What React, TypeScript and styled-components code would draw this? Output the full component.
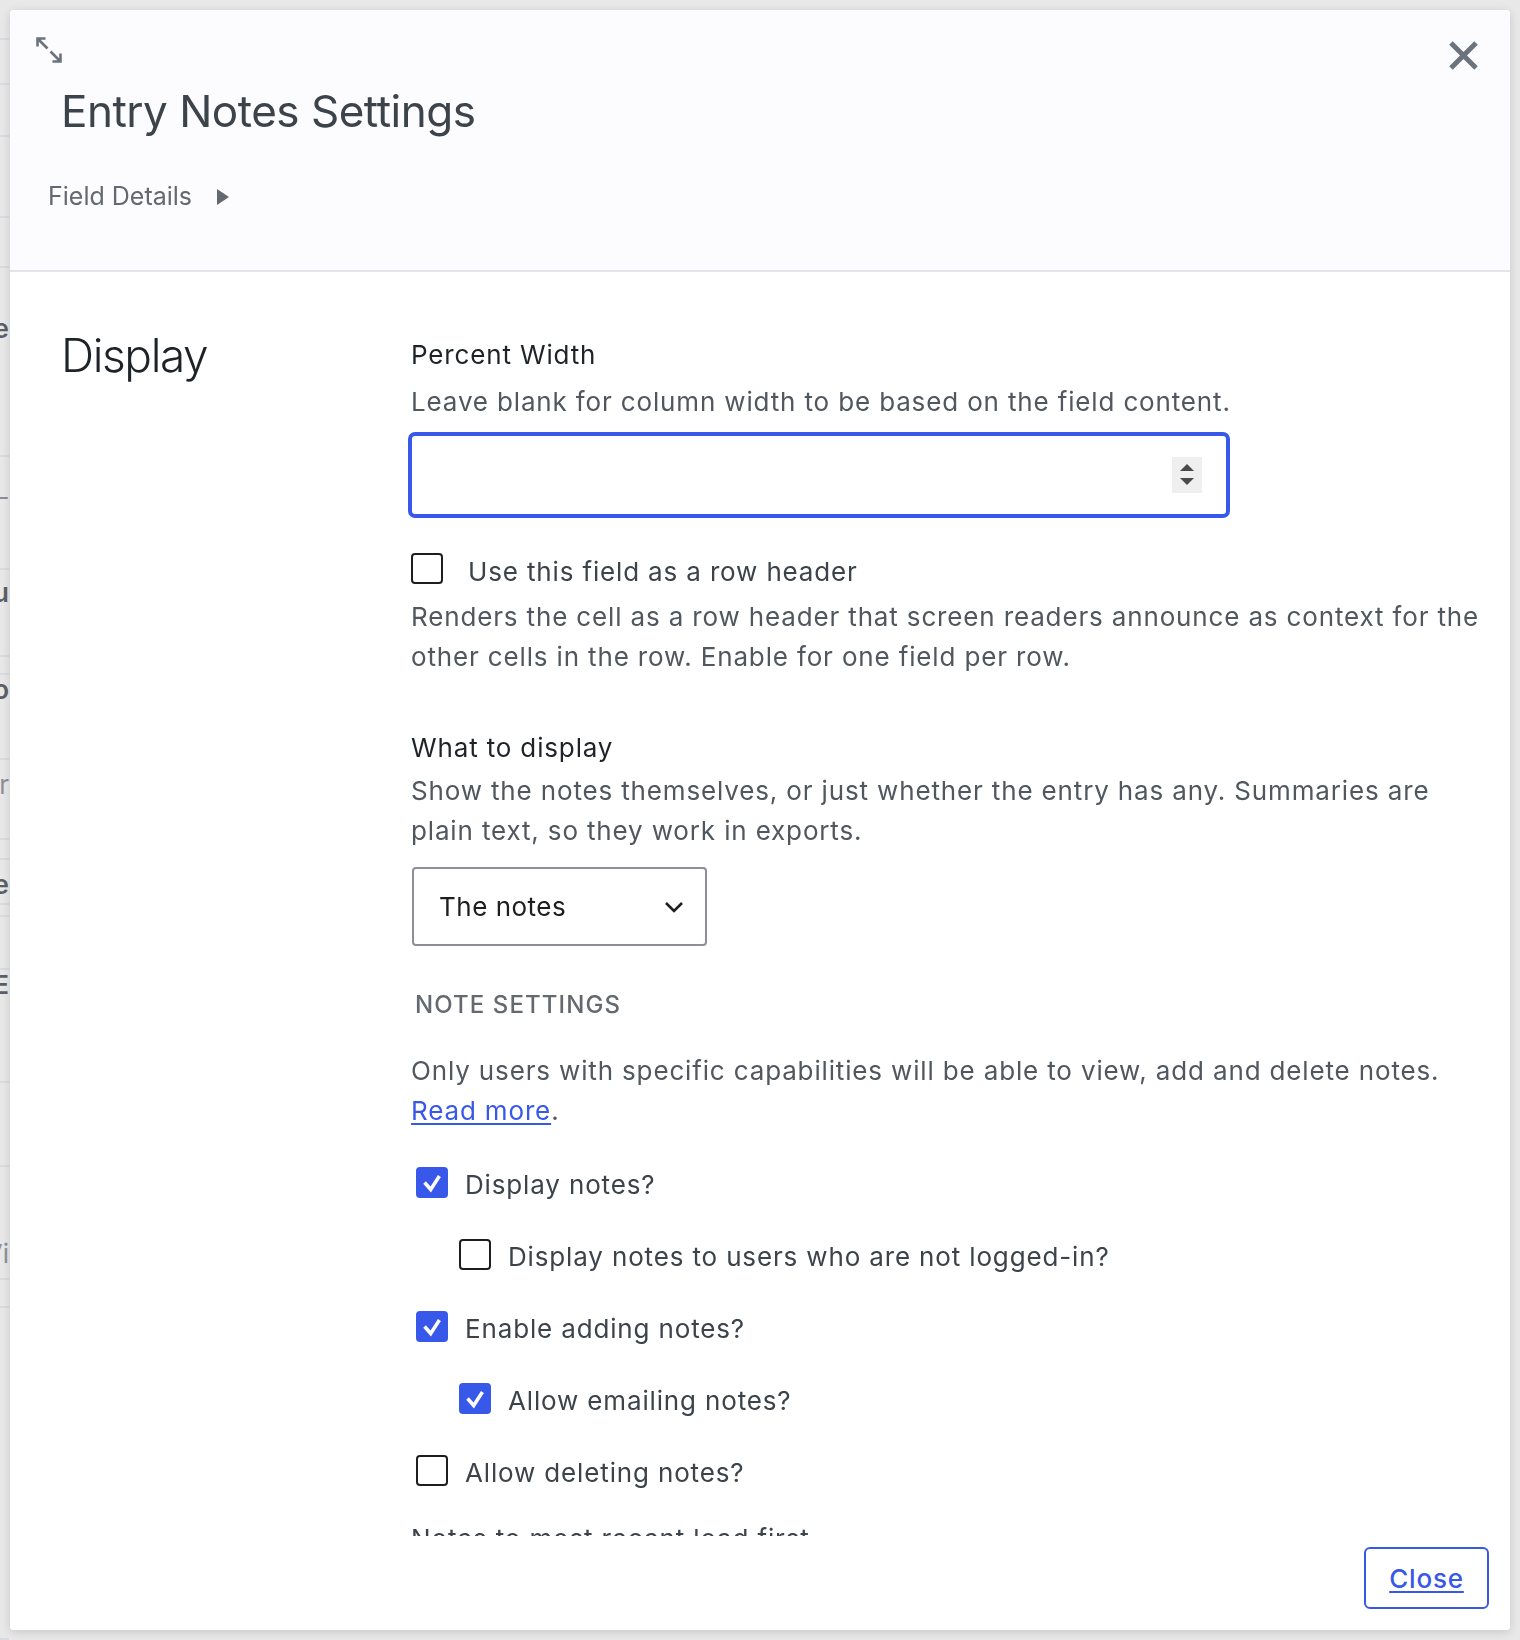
import * as React from 'react'
import styled, {createGlobalStyle} from 'styled-components'

const BLUE = '#3858e9'

const GlobalStyle = createGlobalStyle`
    html, body {
        margin: 0;
        padding: 0;
    }

    body {
        width: 1520px;
        height: 1640px;
        overflow: hidden;
        background: #e8e8e9;
        font-family: Inter, "Noto Sans", "Liberation Sans", sans-serif;
        -webkit-font-smoothing: antialiased;
    }
`

// admin page that peeks out round the modal
const PageBehind = styled.div`
    display: flex;
    flex-direction: column;
    width: 9px;
    height: 1640px;
    overflow: hidden;
`

const BehindRow = styled.div<{$h: number; $pad: number; $bold?: boolean}>`
    box-sizing: border-box;
    height: ${p => p.$h}px;
    padding-top: ${p => p.$pad}px;
    border-bottom: 2px solid #d8dce1;
    display: flex;
    justify-content: flex-end;
    align-items: flex-start;
    overflow: hidden;
    white-space: nowrap;
    font-size: 26px;
    line-height: 30px;
    font-weight: ${p => (p.$bold ? 600 : 400)};
    color: ${p => (p.$bold ? '#5b6068' : '#8c9096')};
`

const behindRows = [
    {h: 40, pad: 0, text: ''},
    {h: 45, pad: 0, text: ''},
    {h: 52, pad: 0, text: ''},
    {h: 81, pad: 0, text: ''},
    {h: 50, pad: 0, text: ''},
    {h: 189, pad: 46, text: 'Title', bold: true},
    {h: 113, pad: 18, text: 'URL'},
    {h: 87, pad: 8, text: 'Menu', bold: true},
    {h: 18, pad: 0, text: ''},
    {h: 85, pad: 0, text: 'Info', bold: true},
    {h: 80, pad: 10, text: 'Author'},
    {h: 20, pad: 0, text: ''},
    {h: 45, pad: 10, text: 'Name', bold: true},
    {h: 12, pad: 0, text: ''},
    {h: 53, pad: 0, text: ''},
    {h: 113, pad: 0, text: 'EE', bold: true},
    {h: 84, pad: 0, text: ''},
    {h: 113, pad: 72, text: 'Vi'},
    {h: 28, pad: 0, text: ''},
    {h: 332, pad: 0, text: ''},
]

const Overlay = styled.div`
    position: fixed;
    inset: 0;
    padding: 10px;
    box-sizing: border-box;
    display: flex;
`

const Modal = styled.div`
    width: 1500px;
    height: 1620px;
    display: flex;
    flex-direction: column;
    background: #fff;
    border-radius: 4px;
    box-shadow: 0 2px 10px rgba(0, 0, 0, 0.14);
    overflow: hidden;
`

const Header = styled.header`
    box-sizing: border-box;
    height: 262px;
    flex: 0 0 auto;
    padding: 27px 32px 0 26px;
    display: flex;
    flex-direction: column;
    background: #fcfcfe;
    border-bottom: 2px solid #e1e5eb;
`

const TopRow = styled.div`
    display: flex;
    justify-content: space-between;
    align-items: flex-start;
`

const IconButton = styled.button<{$top?: number}>`
    margin: ${p => p.$top || 0}px 0 0;
    padding: 0;
    border: 0;
    background: none;
    display: flex;
    color: #6b737c;
    cursor: pointer;
`

const Title = styled.h1`
    margin: 14px 0 0 25px;
    font-size: 44px;
    line-height: 54px;
    font-weight: 400;
    letter-spacing: -0.5px;
    color: #3c434a;
`

const FieldDetails = styled.div`
    margin: 40px 0 0 12px;
    display: flex;
    align-items: center;
    gap: 25px;
    font-size: 25px;
    line-height: 37.5px;
    color: #646970;
`

const Body = styled.div`
    flex: 1 1 auto;
    overflow: hidden;
    display: grid;
    grid-template-columns: 350px 1fr;
    align-items: start;
    padding: 55px 20px 0 51px;
`

const SectionTitle = styled.h2`
    margin: 0;
    font-size: 46px;
    line-height: 57.6px;
    font-weight: 300;
    letter-spacing: -1.4px;
    color: #1d2327;
`

const Fields = styled.div`
    display: flex;
    flex-direction: column;
    align-items: flex-start;
    padding-top: 9px;
    font-size: 26px;
    letter-spacing: 0.85px;
`

const FieldLabel = styled.label<{$gap?: number}>`
    margin-top: ${p => p.$gap || 0}px;
    line-height: 37.5px;
    color: #1d2327;
`

const Description = styled.p<{$gap?: number; $dark?: boolean}>`
    margin: ${p => p.$gap || 0}px 0 0;
    line-height: 40px;
    white-space: nowrap;
    color: ${p => (p.$dark ? '#3c434a' : '#50575e')};

    a {
        color: ${BLUE};
        text-decoration: underline;
        text-underline-offset: 3px;
    }
`

const NumberField = styled.div`
    box-sizing: border-box;
    width: 822px;
    height: 86px;
    margin: 10px 0 0 -3px;
    padding-right: 24px;
    display: flex;
    align-items: center;
    justify-content: flex-end;
    border: 4px solid ${BLUE};
    border-radius: 7px;
`

const Spinner = styled.div`
    width: 30px;
    height: 36px;
    display: flex;
    flex-direction: column;
    align-items: center;
    justify-content: center;
    gap: 7px;
    background: #efefef;
`

const Option = styled.label<{$gap?: number; $indent?: number; $labelGap?: number}>`
    margin: ${p => p.$gap || 0}px 0 0 ${p => p.$indent || 0}px;
    display: flex;
    align-items: flex-start;
    gap: ${p => p.$labelGap || 17}px;
    line-height: 40px;
    color: #3c434a;
`

const Box = styled.span<{$checked?: boolean; $top: number}>`
    box-sizing: border-box;
    width: 32px;
    height: 31px;
    flex: 0 0 auto;
    display: flex;
    align-items: center;
    justify-content: center;
    margin-top: ${p => p.$top}px;
    border: 2px solid ${p => (p.$checked ? BLUE : '#1e1e1e')};
    border-radius: 4px;
    background: ${p => (p.$checked ? BLUE : '#fff')};
`

const SelectBox = styled.div`
    box-sizing: border-box;
    width: 295px;
    height: 79px;
    margin: 16px 0 0 1px;
    padding: 0 21px 0 25px;
    display: flex;
    align-items: center;
    justify-content: space-between;
    border: 2px solid #8c8f94;
    border-radius: 4px;
    letter-spacing: 0.5px;
    color: #1e1e1e;
`

const GroupHeading = styled.h3`
    margin: 42px 0 0 4px;
    font-size: 24px;
    line-height: 34px;
    font-weight: 500;
    letter-spacing: 1.1px;
    text-transform: uppercase;
    color: #646970;
`

const OptionList = styled.div`
    margin-top: 34px;
    padding-left: 5px;
    display: flex;
    flex-direction: column;
    gap: 32px;
`

const Footer = styled.footer`
    box-sizing: border-box;
    height: 94px;
    flex: 0 0 auto;
    padding: 11px 21px 0 0;
    display: flex;
    justify-content: flex-end;
    align-items: flex-start;
    background: #fff;
`

const CloseButton = styled.button`
    box-sizing: border-box;
    width: 125px;
    height: 62px;
    border: 2px solid ${BLUE};
    border-radius: 6px;
    background: #fff;
    font-family: inherit;
    font-size: 26px;
    font-weight: 500;
    letter-spacing: 0.8px;
    color: ${BLUE};
    text-decoration: underline;
    text-underline-offset: 3px;
    cursor: pointer;
`

const Check = ({checked, top = 2}: {checked?: boolean; top?: number}) => (
    <Box $checked={checked} $top={top}>
        {checked && (
            <svg width="32" height="31" viewBox="0 0 32 31">
                <path d="M7.5 15.5 L14.5 23.5 L24.5 8" fill="none" stroke="#fff" strokeWidth="4"/>
            </svg>
        )}
    </Box>
)

const options = [
    {label: 'Display notes?', checked: true, nested: false},
    {label: 'Display notes to users who are not logged-in?', checked: false, nested: true},
    {label: 'Enable adding notes?', checked: true, nested: false},
    {label: 'Allow emailing notes?', checked: true, nested: true},
    {label: 'Allow deleting notes?', checked: false, nested: false},
]

export default function App() {
    return (
        <>
            <GlobalStyle/>
            <PageBehind>
                {behindRows.map((r, i) => (
                    <BehindRow key={i} $h={r.h} $pad={r.pad} $bold={r.bold}>{r.text}</BehindRow>
                ))}
            </PageBehind>
            <Overlay>
                <Modal role="dialog">
                    <Header>
                        <TopRow>
                            <IconButton aria-label="Expand">
                                <svg width="26" height="26" viewBox="0 0 26 26" fill="none" stroke="currentColor" strokeWidth="2.6">
                                    <path d="M2 2 L11.5 11.5 M1.5 9.5 V1.5 H9.5"/>
                                    <path d="M14.5 14.5 L24 24 M16.5 24.5 H24.5 V16.5"/>
                                </svg>
                            </IconButton>
                            <IconButton $top={4} aria-label="Close">
                                <svg width="29" height="29" viewBox="0 0 29 29" stroke="currentColor" strokeWidth="5">
                                    <path d="M2 2 L27 27 M27 2 L2 27"/>
                                </svg>
                            </IconButton>
                        </TopRow>
                        <Title>Entry Notes Settings</Title>
                        <FieldDetails>
                            Field Details
                            <svg width="12" height="16" viewBox="0 0 12 16">
                                <path d="M0 0 L12 8 L0 16 Z" fill="currentColor"/>
                            </svg>
                        </FieldDetails>
                    </Header>

                    <Body>
                        <SectionTitle>Display</SectionTitle>
                        <Fields>
                            <FieldLabel>Percent Width</FieldLabel>
                            <Description $gap={8}>Leave blank for column width to be based on the field content.</Description>
                            <NumberField>
                                <Spinner>
                                    <svg width="14" height="7" viewBox="0 0 14 7"><path d="M7 0 L14 7 H0 Z" fill="#4a4a4a"/></svg>
                                    <svg width="14" height="7" viewBox="0 0 14 7"><path d="M0 0 H14 L7 7 Z" fill="#4a4a4a"/></svg>
                                </Spinner>
                            </NumberField>

                            <Option $gap={34} $labelGap={25}>
                                <Check top={1}/>
                                Use this field as a row header
                            </Option>
                            <Description $gap={5}>
                                Renders the cell as a row header that screen readers announce as context for the<br/>
                                other cells in the row. Enable for one field per row.
                            </Description>

                            <FieldLabel $gap={52}>What to display</FieldLabel>
                            <Description $gap={5}>
                                Show the notes themselves, or just whether the entry has any. Summaries are<br/>
                                plain text, so they work in exports.
                            </Description>
                            <SelectBox>
                                The notes
                                <svg width="20" height="12" viewBox="0 0 20 12">
                                    <path d="M2 2 L10 10 L18 2" fill="none" stroke="#1e1e1e" strokeWidth="2.6"/>
                                </svg>
                            </SelectBox>

                            <GroupHeading>Note Settings</GroupHeading>
                            <Description $gap={29}>
                                Only users with specific capabilities will be able to view, add and delete notes.<br/>
                                <a href="#">Read more</a>.
                            </Description>

                            <OptionList>
                                {options.map(o => (
                                    <Option key={o.label} $indent={o.nested ? 43 : 0}>
                                        <Check checked={o.checked}/>
                                        {o.label}
                                    </Option>
                                ))}
                            </OptionList>
                            <Description $gap={26} $dark>Notes to most recent load first.</Description>
                        </Fields>
                    </Body>

                    <Footer>
                        <CloseButton>Close</CloseButton>
                    </Footer>
                </Modal>
            </Overlay>
        </>
    )
}
